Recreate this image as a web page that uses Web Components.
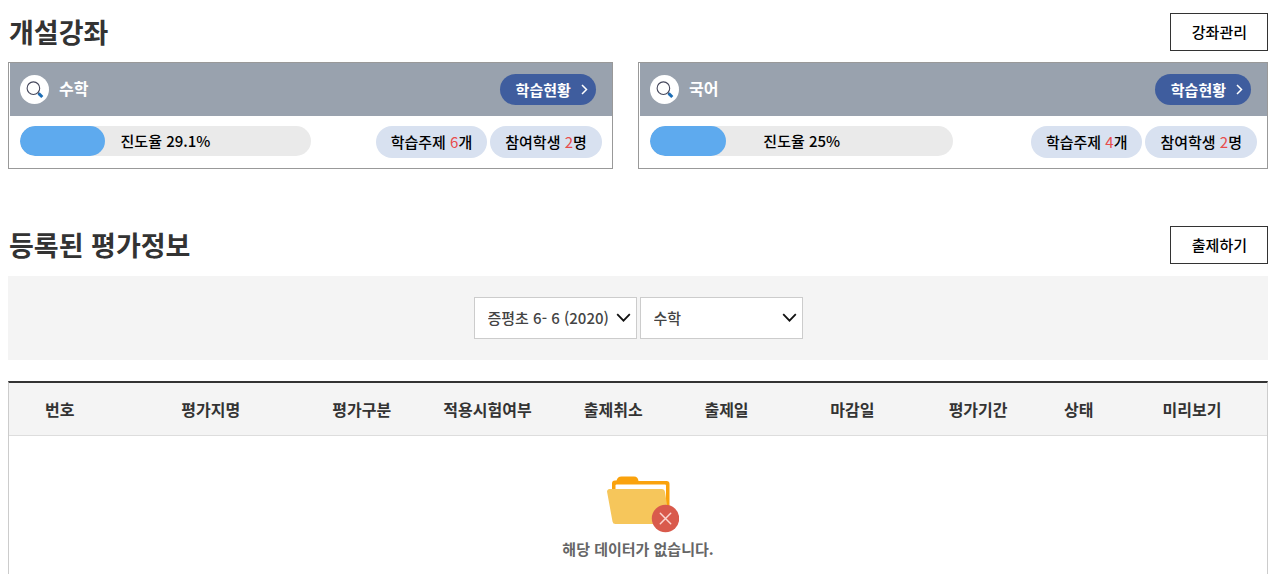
<!DOCTYPE html>
<html lang="ko">
<head>
<meta charset="utf-8">
<title>개설강좌</title>
<style>
  body {
    margin: 0;
    background: #fff;
    color: #000;
    font: 500 15px/22px "Noto Sans CJK KR", "Noto Sans", sans-serif;
  }
</style>
</head>
<body>
<course-page></course-page>

<template id="course-page">
  <style>
    :host { display: block; padding: 13px 10px 0 8px; }
    .cards { display: grid; grid-template-columns: 48fr 50fr; column-gap: 2%; margin: 11px 0 57px; }
    .filters { display: flex; justify-content: center; gap: 3px; margin: 12px 0 21px; padding: 21px 0; background: #f4f4f4; }
  </style>
  <section>
    <section-head action="강좌관리">개설강좌</section-head>
    <div class="cards">
      <course-card progress="29.1" topics="6" students="2">수학</course-card>
      <course-card progress="25" topics="4" students="2">국어</course-card>
    </div>
  </section>
  <section>
    <section-head action="출제하기">등록된 평가정보</section-head>
    <div class="filters">
      <filter-select label="학급" value="증평초 6- 6 (2020)"></filter-select>
      <filter-select label="과목" value="수학"></filter-select>
    </div>
    <exam-table></exam-table>
  </section>
</template>

<template id="section-head">
  <style>
    :host { display: flex; align-items: center; justify-content: space-between; }
    h2 { margin: 0; padding-left: 1px; font-size: 27px; line-height: 38px; font-weight: 700; color: #333; }
    button { box-sizing: border-box; height: 38px; padding: 0 20px 0 21px; border: 1px solid #333; background: #fff; color: #000; font: inherit; }
  </style>
  <h2><slot></slot></h2>
  <button type="button"></button>
</template>

<template id="course-card">
  <style>
    :host { display: block; border: 1px solid #999; }
    header { display: flex; align-items: center; height: 53px; margin-left: 1px; padding: 0 16px 0 10px; background: #99a2ae; }
    svg { display: block; }
    .lens { flex: none; }
    h3 { flex: 1; margin: 0 0 0 10px; padding-bottom: 4px; font-size: 16px; line-height: 24px; font-weight: 700; color: #fff; }
    button { display: flex; align-items: center; gap: 10px; height: 31px; padding: 0 8px 0 16px; border: 0; border-radius: 16px; background: #3f5d9e; color: #fff; font: inherit; font-weight: 700; }
    .stats { display: flex; align-items: flex-start; gap: 3px; padding: 10px 10px 11px 11px; }
    .half { flex: 0 0 50%; }
    .bar { display: grid; align-items: center; height: 30px; border-radius: 15px; background: #eaeaea; overflow: hidden; }
    .bar > * { grid-area: 1 / 1; }
    .fill { height: 30px; border-radius: 15px; background: #5eaaee; }
    .bar span { text-align: center; }
    .pill { padding: 5px 15px; border-radius: 16px; background: #d8e1f0; white-space: nowrap; }
    .pill:nth-child(2) { margin-left: auto; }
    .stats { padding-bottom: 10px; }
    b { font-weight: 400; color: #e84c4c; }
  </style>
  <header>
    <svg class="lens" width="29" height="29" viewBox="0 0 29 29" aria-hidden="true">
      <circle cx="14.5" cy="14.5" r="14.5" fill="#fff"/>
      <circle cx="13.4" cy="13.2" r="6.3" fill="none" stroke="#46485c" stroke-width="1.1"/>
      <path d="M17.9 17.7l1.5 1.5" stroke="#46485c" stroke-width="1.1"/>
      <path d="M18.6 18.4l3.7 3.6" stroke="#1c6db5" stroke-width="3"/>
    </svg>
    <h3><slot></slot></h3>
    <button type="button">학습현황
      <svg width="7" height="11" viewBox="0 0 7 11" aria-hidden="true"><path d="M1 1l4.5 4.5L1 10" fill="none" stroke="#fff" stroke-width="1.5"/></svg>
    </button>
  </header>
  <div class="stats">
    <div class="half bar" role="progressbar" aria-label="진도율" aria-valuemin="0" aria-valuemax="100">
      <div class="fill"></div>
      <span></span>
    </div>
    <div class="pill">학습주제 <b id="topics"></b>개</div>
    <div class="pill">참여학생 <b id="students"></b>명</div>
  </div>
</template>

<template id="filter-select">
  <style>
    :host { display: grid; align-items: center; width: 163px; }
    select, svg { grid-area: 1 / 1; }
    select { appearance: none; box-sizing: border-box; width: 100%; height: 42px; margin: 0; padding: 0 24px 0 13px; border: 1px solid #ccc; border-radius: 0; background: #fff; color: #444; font: inherit; }
    svg { justify-self: end; margin-right: 6px; pointer-events: none; }
  </style>
  <select><option selected></option></select>
  <svg width="15" height="10" viewBox="0 0 15 10" aria-hidden="true"><path d="M1.2 1.2l6.3 6.5 6.3-6.5" fill="none" stroke="#111" stroke-width="1.8"/></svg>
</template>

<template id="exam-table">
  <style>
    :host { display: block; }
    table { width: 100%; table-layout: fixed; border-spacing: 0; border: solid #ccc; border-width: 0 1px 1px; border-top: 2px solid #333; }
    th { height: 52px; padding: 0 0 0 1px; border-bottom: 1px solid #ddd; background: #f4f4f4; color: #333; font-size: 16px; line-height: 24px; font-weight: 700; }
    td { padding: 40px 0; text-align: center; color: #666; font-weight: 700; }
    svg { display: block; margin: 0 auto 5px; }
    p { margin: 0; }
  </style>
  <table>
    <colgroup></colgroup>
    <thead><tr></tr></thead>
    <tbody>
      <tr><td colspan="10">
        <svg width="82" height="57" viewBox="-10 0 82 57" aria-hidden="true">
          <path d="M5 14V7.5a3 3 0 0 1 3-3h1.5c1-2.5 2-4 5-4H27c3 0 4 1.5 4.5 4.500h28a3 3 0 0 1 3 3V40H10z" fill="#faa20c"/>
          <path d="M8.5 13V9.5a1 1 0 0 1 1-1H58a1 1 0 0 1 1 1V30H12z" fill="#fff"/>
          <path d="M2.5 13H54.5a3.5 3.5 0 0 1 3.5 3l5 32H8.5a3 3 0 0 1-3-2.5L.1 16a2.5 2.5 0 0 1 2.4-3z" fill="#f6c65b"/>
          <circle cx="58.5" cy="42.5" r="13.7" fill="#d95a4c"/>
          <path d="M53.3 37.3l10.4 10.4M63.7 37.3L53.3 47.7" stroke="#fbd5d0" stroke-width="1.5" stroke-linecap="round"/>
        </svg>
        <p>해당 데이터가 없습니다.</p>
      </td></tr>
    </tbody>
  </table>
</template>

<script>
  class TemplateElement extends HTMLElement {
    constructor() {
      super();
      const template = document.getElementById(this.localName);
      this.attachShadow({ mode: "open" }).append(template.content.cloneNode(true));
    }
    find(selector) { return this.shadowRoot.querySelector(selector); }
  }

  class SectionHead extends TemplateElement {
    connectedCallback() { this.find("button").textContent = this.getAttribute("action"); }
  }

  class CourseCard extends TemplateElement {
    connectedCallback() {
      const progress = this.getAttribute("progress");
      this.find(".bar").setAttribute("aria-valuenow", progress);
      this.find(".fill").style.width = progress + "%";
      this.find(".bar span").textContent = "진도율 " + progress + "%";
      this.find("#topics").textContent = this.getAttribute("topics");
      this.find("#students").textContent = this.getAttribute("students");
    }
  }

  class FilterSelect extends TemplateElement {
    connectedCallback() {
      this.find("select").setAttribute("aria-label", this.getAttribute("label"));
      this.find("option").textContent = this.getAttribute("value");
    }
  }

  class ExamTable extends TemplateElement {
    static columns = [
      ["번호", 8], ["평가지명", 16], ["평가구분", 8], ["적용시험여부", 12], ["출제취소", 8],
      ["출제일", 10], ["마감일", 10], ["평가기간", 10], ["상태", 6], ["미리보기", 12]
    ];
    connectedCallback() {
      for (const [name, share] of ExamTable.columns) {
        const col = document.createElement("col");
        col.style.width = share + "%";
        this.find("colgroup").append(col);
        const th = document.createElement("th");
        th.scope = "col";
        th.textContent = name;
        this.find("thead tr").append(th);
      }
    }
  }

  class CoursePage extends TemplateElement {}

  customElements.define("section-head", SectionHead);
  customElements.define("course-card", CourseCard);
  customElements.define("filter-select", FilterSelect);
  customElements.define("exam-table", ExamTable);
  customElements.define("course-page", CoursePage);
</script>
</body>
</html>
